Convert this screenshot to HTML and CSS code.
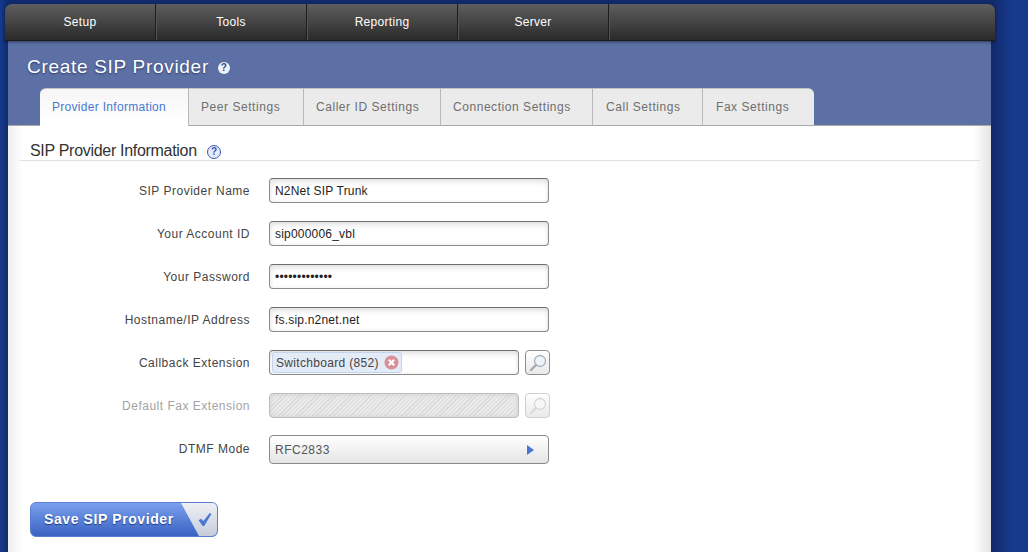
FILE: index.html
```html
<!DOCTYPE html>
<html lang="en">
<head>
    <meta charset="UTF-8">
    <meta name="viewport" content="width=device-width, initial-scale=1.0">
    <title>Create SIP Provider</title>
    <link rel="stylesheet" href="styles.css">
</head>
<body>
    <div class="page">
        <div class="nav">
            <a class="nav-item">Setup</a>
            <a class="nav-item">Tools</a>
            <a class="nav-item">Reporting</a>
            <a class="nav-item">Server</a>
        </div>
        <div class="panel">
            <div class="panel-head">
                <h1>Create SIP Provider <span class="help help-small">?</span></h1>
                <div class="tabs">
                    <a class="tab tab-active tab-1">Provider Information</a>
                    <a class="tab tab-2">Peer Settings</a>
                    <a class="tab tab-3">Caller ID Settings</a>
                    <a class="tab tab-4">Connection Settings</a>
                    <a class="tab tab-5">Call Settings</a>
                    <a class="tab tab-6">Fax Settings</a>
                </div>
            </div>
            <div class="panel-body">
                <h2>SIP Provider Information <span class="help">?</span></h2>
                <div class="form">
                    <div class="row">
                        <label>SIP Provider Name</label>
                        <input class="field" type="text" value="N2Net SIP Trunk">
                    </div>
                    <div class="row">
                        <label>Your Account ID</label>
                        <input class="field" type="text" value="sip000006_vbl">
                    </div>
                    <div class="row">
                        <label>Your Password</label>
                        <input class="field field-pass" type="password" value="1234567890123">
                    </div>
                    <div class="row">
                        <label>Hostname/IP Address</label>
                        <input class="field" type="text" value="fs.sip.n2net.net">
                    </div>
                    <div class="row">
                        <label>Callback Extension</label>
                        <div class="field field-short">
                            <span class="chip">Switchboard (852)
                                <svg class="chip-x" width="15" height="15" viewBox="0 0 15 15">
                                    <circle cx="7.5" cy="7.5" r="7" fill="#d98f96"/>
                                    <path d="M4.8 4.8l5.4 5.4M10.2 4.8l-5.4 5.4" stroke="#fff" stroke-width="2.2"/>
                                </svg>
                            </span>
                        </div>
                        <a class="search">
                            <svg width="20" height="20" viewBox="0 0 20 20">
                                <circle cx="12" cy="8" r="5.5" fill="#eef3fa" stroke="#a3b0c0" stroke-width="1.3"/>
                                <path d="M8 12l-5 5" stroke="#a8a8a8" stroke-width="2.2" stroke-linecap="round"/>
                            </svg>
                        </a>
                    </div>
                    <div class="row row-disabled">
                        <label>Default Fax Extension</label>
                        <div class="field field-short field-off"></div>
                        <a class="search search-off">
                            <svg width="20" height="20" viewBox="0 0 20 20">
                                <circle cx="12" cy="8" r="5.5" fill="#f6f6f6" stroke="#d6d6d6" stroke-width="1.3"/>
                                <path d="M8 12l-5 5" stroke="#d8d8d8" stroke-width="2.2" stroke-linecap="round"/>
                            </svg>
                        </a>
                    </div>
                    <div class="row row-select">
                        <label>DTMF Mode</label>
                        <div class="select">
                            <span>RFC2833</span>
                            <span class="arrow"></span>
                        </div>
                    </div>
                </div>
                <a class="save">
                    <span class="save-text">Save SIP Provider</span>
                    <span class="save-tick">
                        <svg width="16" height="15" viewBox="0 0 20 18">
                            <path d="M2 10l3-2 3 3 8-10 2 1-9 15h-2z" fill="#4b78d2"/>
                        </svg>
                    </span>
                </a>
            </div>
        </div>
    </div>
</body>
</html>
```

FILE: styles.css
```css
html, body {
    margin: 0;
    height: 552px;
    overflow: hidden;
}
body {
    font-family: "Liberation Sans", Arial, sans-serif;
    font-size: 12px;
    background: linear-gradient(90deg, #163a8c 0, #0f2a6e 8px, #12296a 991px, #163a8c 1012px);
}
.page {
    width: 990px;
    padding: 4px 0 0 5px;
}
.nav {
    display: flex;
    height: 36px;
    position: relative;
    z-index: 2;
    background: linear-gradient(#5e5e5e, #2a2a2a);
    border-radius: 7px 7px 0 0;
    border-bottom: 1px solid #1c1c1c;
    box-shadow: 0 1px 3px rgba(0, 0, 0, .5);
}
.nav-item {
    width: 150px;
    line-height: 37px;
    text-align: center;
    color: #fff;
    letter-spacing: .3px;
    border-right: 1px solid #1d1d1d;
    box-shadow: 1px 0 0 #555;
}
.panel {
    margin: 0 4px 0 3px;
}
.panel-head {
    height: 84px;
    background: #5c70a5;
    border-bottom: 1px solid #a9a9a9;
    display: flex;
    flex-direction: column;
    justify-content: flex-end;
}
h1 {
    margin: 0 0 10px 19px;
    font-size: 19px;
    font-weight: normal;
    letter-spacing: .7px;
    color: #fff;
    text-shadow: 0 1px 2px #2b3a68;
}
.help {
    display: inline-block;
    width: 12px;
    height: 12px;
    margin-left: 6px;
    border: 1px solid #3a55b5;
    border-radius: 50%;
    background: #e8ecf8;
    color: #3a55b5;
    font-size: 10px;
    font-weight: bold;
    line-height: 12px;
    letter-spacing: 0;
    text-align: center;
    text-shadow: none;
    vertical-align: 1px;
}
.help-small {
    border: 0;
    margin-left: 3px;
    background: #eef1fa;
    color: #2c4a8c;
    vertical-align: 2px;
}
.tabs {
    display: flex;
    margin: 0 0 -1px 32px;
    height: 38px;
}
.tab {
    box-sizing: border-box;
    padding-left: 12px;
    line-height: 37px;
    color: #6e6e6e;
    letter-spacing: .55px;
    background: #ebebeb;
    border-top: 1px solid #c4c4c4;
    border-right: 1px solid #b9b9b9;
    border-bottom: 1px solid #a9a9a9;
}
.tab-active {
    color: #4a78d0;
    letter-spacing: .3px;
    background: linear-gradient(#f6f6f6, #fff);
    border-bottom: 0;
    border-radius: 6px 0 0 0;
}
.tab-1 { width: 149px; }
.tab-2 { width: 115px; }
.tab-3 { width: 137px; }
.tab-4 { width: 152px; }
.tab-5 { width: 110px; padding-left: 13px; }
.tab-6 { width: 111px; padding-left: 13px; border-right: 0; border-radius: 0 6px 0 0; }
.panel-body {
    height: 426px;
    background: linear-gradient(90deg, #eee 0, #fff 14px, #fff 966px, #e4e4e4 100%);
    padding: 0 11px 0 12px;
}
h2 {
    margin: 0;
    padding: 15px 0 0 10px;
    height: 19px;
    font-size: 16px;
    line-height: 20px;
    font-weight: normal;
    letter-spacing: -.3px;
    color: #333;
    border-bottom: 1px solid #e0e0e0;
}
.form {
    padding-top: 17px;
}
.row {
    display: flex;
    align-items: center;
    height: 25px;
    margin-bottom: 18px;
}
.row label {
    width: 230px;
    margin-right: 19px;
    text-align: right;
    color: #444;
    letter-spacing: .5px;
}
.field {
    box-sizing: border-box;
    width: 280px;
    height: 25px;
    margin: 0;
    padding: 0 5px;
    font-family: inherit;
    font-size: 12px;
    color: #222;
    letter-spacing: .2px;
    background: #fff;
    border: 1px solid #8a8a8a;
    border-top-color: #6e6e6e;
    border-radius: 4px;
    box-shadow: inset 0 4px 6px -2px #dcdcdc, inset 0 0 4px #eee;
    outline: none;
}
.field-short {
    width: 250px;
    padding: 2px;
    display: flex;
    align-items: center;
}
.field-off {
    border-color: #bdbdbd;
    background: repeating-linear-gradient(135deg, #dadada 0, #dadada 1px, #eaeaea 1px, #eaeaea 3px);
    box-shadow: inset 0 0 4px #cfcfcf;
}
.chip {
    display: flex;
    align-items: center;
    gap: 5px;
    height: 19px;
    padding: 0 2px 0 3px;
    background: #e3ebf7;
    border: 1px solid #c4d4ea;
    border-radius: 3px;
    color: #444;
    letter-spacing: .32px;
}
.chip-x {
    flex: none;
}
.search {
    box-sizing: border-box;
    display: flex;
    align-items: center;
    justify-content: center;
    width: 25px;
    height: 25px;
    margin-left: 6px;
    border: 1px solid #8f8f8f;
    border-radius: 4px;
    background: linear-gradient(#fff, #e9e9e9);
}
.search-off {
    border-color: #cfcfcf;
}
.row-disabled label {
    color: #a3a3a3;
}
.row-select {
    height: 29px;
    margin-top: -1px;
}
.row-select label {
    margin-bottom: 2px;
}
.select {
    box-sizing: border-box;
    width: 280px;
    height: 29px;
    padding: 0 14px 0 5px;
    display: flex;
    align-items: center;
    justify-content: space-between;
    color: #555;
    letter-spacing: .5px;
    border: 1px solid #8a8a8a;
    border-radius: 4px;
    background: linear-gradient(#fff, #e4e4e4);
}
.arrow {
    width: 0;
    height: 0;
    border-left: 7px solid #4a78d0;
    border-top: 5px solid transparent;
    border-bottom: 5px solid transparent;
}
.save {
    box-sizing: border-box;
    display: flex;
    width: 188px;
    height: 35px;
    margin: 38px 0 0 10px;
    overflow: hidden;
    border: 1px solid #5b7fd0;
    border-radius: 6px;
    background: linear-gradient(#7aa0ee, #3a62c2);
}
.save-text {
    flex: 1;
    padding-left: 13px;
    color: #fff;
    font-size: 14px;
    font-weight: bold;
    letter-spacing: .6px;
    line-height: 32px;
    text-shadow: 0 1px 1px #1d3a86;
}
.save-tick {
    box-sizing: border-box;
    width: 36px;
    display: flex;
    align-items: center;
    justify-content: flex-end;
    padding-right: 4px;
    background: linear-gradient(#eef0f5, #c6ccda);
    clip-path: polygon(0 0, 100% 0, 100% 100%, 50% 100%);
}
```
